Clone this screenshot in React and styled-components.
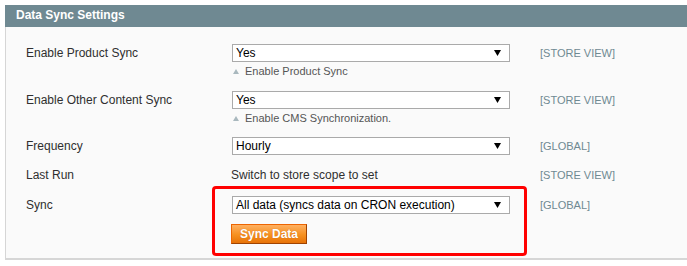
import React from "react";
import styled, { createGlobalStyle } from "styled-components";

const GlobalStyle = createGlobalStyle`
  body {
    margin: 0;
    background: #fff;
    overflow: hidden;
    font-family: "Liberation Sans", Arial, sans-serif;
  }
`;

const Fieldset = styled.div`
  margin: 5px 0 0 5px;
  width: 700px;
`;

const Head = styled.div`
  height: 22px;
  line-height: 21px;
  padding-left: 11px;
  background: #6f8992;
  color: #fff;
  font-weight: bold;
  font-size: 12px;
`;

const Body = styled.div`
  background: #fafafa;
  border-left: 1px solid #d6d6d6;
  border-bottom: 2px solid #d6d6d6;
  padding: 17px 0 14px 20px;
  display: flex;
  flex-direction: column;
`;

const Row = styled.div`
  display: grid;
  grid-template-columns: 206px 278px 1fr;
  align-items: start;
  margin-top: ${(p) => p.$top || 0}px;
`;

const Label = styled.div`
  font-size: 12px;
  line-height: 18px;
  color: #2f2f2f;
`;

const Value = styled.div`
  position: relative;
  display: flex;
  flex-direction: column;
  align-items: flex-start;

  ${(p) =>
    p.$highlight &&
    `
    &::before {
      content: "";
      position: absolute;
      top: -10px;
      left: -20px;
      right: -17px;
      bottom: -12px;
      border: 3px solid #ff0000;
      border-radius: 4px;
      pointer-events: none;
    }
  `}
`;

const SelectBox = styled.div`
  box-sizing: border-box;
  width: 278px;
  height: 18px;
  border: 1px solid #aaa;
  background: #fff;
  display: flex;
  align-items: center;
  justify-content: space-between;
  padding: 0 8px 0 3px;
  font-size: 12px;
  color: #000;
`;

const PlainText = styled.div`
  font-size: 12px;
  line-height: 18px;
  color: #2f2f2f;
  margin-left: -1px;
`;

const Note = styled.div`
  display: flex;
  align-items: center;
  gap: 6px;
  margin-top: 2px;
  padding-left: 1px;
  font-size: 11px;
  line-height: 15px;
  color: #555;
`;

const Scope = styled.div`
  padding-left: 30px;
  font-size: 11px;
  line-height: 18px;
  color: #6f8992;
`;

const Button = styled.button`
  margin-top: 10px;
  box-sizing: border-box;
  height: 20px;
  padding: 0 8px;
  margin-left: -1px;
  border: 1px solid;
  border-color: #ed6502 #a04300 #a04300 #ed6502;
  background: linear-gradient(#ffb061, #f6901f 55%, #e77308);
  color: #fff;
  font-family: "Liberation Sans", Arial, sans-serif;
  font-weight: bold;
  font-size: 12px;
  text-shadow: 0 0 1px rgba(160, 67, 0, 0.5);
  cursor: pointer;
`;

const Arrow = () => (
  <svg width="7" height="6" viewBox="0 0 7 6">
    <polygon points="0,0 7,0 3.5,6" fill="#000" />
  </svg>
);

const NoteArrow = () => (
  <svg width="6" height="5" viewBox="0 0 6 5">
    <polygon points="0,5 6,5 3,0" fill="#a9b8be" />
  </svg>
);

const Select = ({ children }) => (
  <SelectBox>
    <span>{children}</span>
    <Arrow />
  </SelectBox>
);

const rows = [
  { label: "Enable Product Sync", value: "Yes", note: "Enable Product Sync", scope: "[STORE VIEW]", top: 0 },
  { label: "Enable Other Content Sync", value: "Yes", note: "Enable CMS Synchronization.", scope: "[STORE VIEW]", top: 12 },
  { label: "Frequency", value: "Hourly", scope: "[GLOBAL]", top: 11 },
];

export default function App() {
  return (
    <>
      <GlobalStyle />
      <Fieldset>
        <Head>Data Sync Settings</Head>
        <Body>
          {rows.map((r) => (
            <Row key={r.label} $top={r.top}>
              <Label>{r.label}</Label>
              <Value>
                <Select>{r.value}</Select>
                {r.note && (
                  <Note>
                    <NoteArrow />
                    {r.note}
                  </Note>
                )}
              </Value>
              <Scope>{r.scope}</Scope>
            </Row>
          ))}
          <Row $top={11}>
            <Label>Last Run</Label>
            <Value>
              <PlainText>Switch to store scope to set</PlainText>
            </Value>
            <Scope>[STORE VIEW]</Scope>
          </Row>
          <Row $top={12}>
            <Label>Sync</Label>
            <Value $highlight>
              <Select>All data (syncs data on CRON execution)</Select>
              <Button>Sync Data</Button>
            </Value>
            <Scope>[GLOBAL]</Scope>
          </Row>
        </Body>
      </Fieldset>
    </>
  );
}
